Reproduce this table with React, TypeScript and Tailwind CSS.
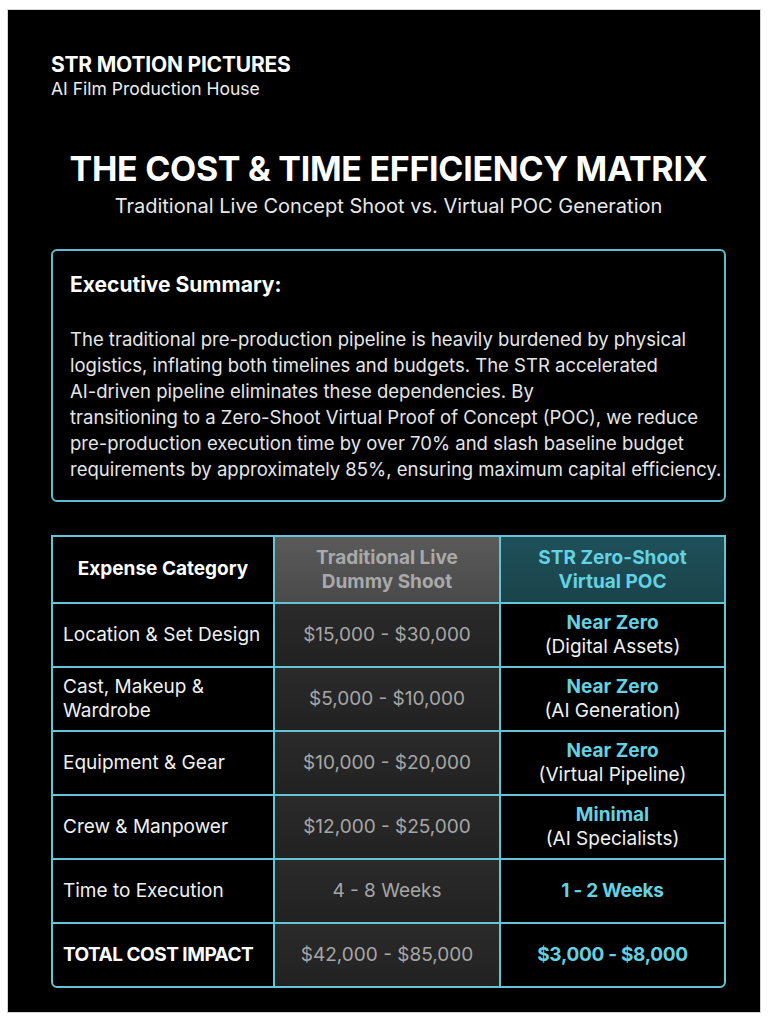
import React from "react";

type Row = {
  label: string;
  trad: string;
  str: string;
  note?: string;
  total?: boolean;
};

const rows: Row[] = [
  { label: "Location & Set Design", trad: "$15,000 - $30,000", str: "Near Zero", note: "(Digital Assets)" },
  { label: "Cast, Makeup & Wardrobe", trad: "$5,000 - $10,000", str: "Near Zero", note: "(AI Generation)" },
  { label: "Equipment & Gear", trad: "$10,000 - $20,000", str: "Near Zero", note: "(Virtual Pipeline)" },
  { label: "Crew & Manpower", trad: "$12,000 - $25,000", str: "Minimal", note: "(AI Specialists)" },
  { label: "Time to Execution", trad: "4 - 8 Weeks", str: "1 - 2 Weeks" },
  { label: "TOTAL COST IMPACT", trad: "$42,000 - $85,000", str: "$3,000 - $8,000", total: true },
];

const summary = [
  "The traditional pre-production pipeline is heavily burdened by physical",
  "logistics, inflating both timelines and budgets. The STR accelerated",
  "AI-driven pipeline eliminates these dependencies. By",
  "transitioning to a Zero-Shoot Virtual Proof of Concept (POC), we reduce",
  "pre-production execution time by over 70% and slash baseline budget",
  "requirements by approximately 85%, ensuring maximum capital efficiency.",
];

export default function App() {
  return (
    <div className="min-h-[1024px] bg-white px-[7px] pt-[9px] font-['Inter','Noto_Sans',sans-serif]">
      <div className="h-[1004px] border border-[#d4d4d4] bg-black pl-[43px] pr-[34px] pt-[42px] text-white">
        {/* brand */}
        <div className="text-[21px] font-bold leading-[25px] tracking-[-0.2px]">STR MOTION PICTURES</div>
        <div className="mt-[1px] text-[17.5px] leading-[22px] text-[#ececec]">AI Film Production House</div>

        {/* title */}
        <h1 className="mt-[49px] text-center text-[34px] font-bold leading-[40px] tracking-[-0.3px]">
          THE COST &amp; TIME EFFICIENCY MATRIX
        </h1>
        <p className="mt-[5px] text-center text-[20px] leading-[24px] text-[#e8e8e8]">
          Traditional Live Concept Shoot vs. Virtual POC Generation
        </p>

        {/* executive summary */}
        <div className="mt-[31px] h-[253px] rounded-[6px] border-2 border-[#5fbccc] px-[17px] pt-[21px]">
          <div className="text-[21px] font-bold leading-[26px]">Executive Summary:</div>
          <div className="mt-[28px] text-[18.5px] leading-[26px] text-[#e6e6e6]">
            {summary.map((l) => (
              <div key={l} className="whitespace-nowrap">
                {l}
              </div>
            ))}
          </div>
        </div>

        {/* matrix */}
        <div className="mt-[33px] grid grid-cols-[222px_226px_1fr] overflow-hidden rounded-b-[6px] border-2 border-[#62c6d8] text-[19px]">
          <div className="flex h-[67px] items-center justify-center border-b-2 border-r-2 border-[#62c6d8] font-bold">
            Expense Category
          </div>
          <div className="flex h-[67px] flex-col items-center justify-center border-b-2 border-r-2 border-[#62c6d8] bg-gradient-to-b from-[#5a5a5a] to-[#4a4a4a] text-center font-bold leading-[24px] text-[#a9a9a9]">
            <span>Traditional Live</span>
            <span>Dummy Shoot</span>
          </div>
          <div className="flex h-[67px] flex-col items-center justify-center border-b-2 border-[#62c6d8] bg-gradient-to-b from-[#1f5059] to-[#1a434b] text-center font-bold leading-[24px] text-[#63d2e2]">
            <span>STR Zero-Shoot</span>
            <span>Virtual POC</span>
          </div>

          {rows.map((r, i) => {
            const last = i === rows.length - 1;
            const b = last ? "h-[62px]" : "h-[64px] border-b-2";
            return (
              <React.Fragment key={r.label}>
                <div
                  className={`flex items-center border-r-2 border-[#62c6d8] pl-[10px] pr-2 leading-[24px] text-[#f0f0f0] ${b} ${
                    r.total ? "font-bold tracking-[-0.5px] text-white" : ""
                  }`}
                >
                  {r.label === "Cast, Makeup & Wardrobe" ? (
                    <span>
                      Cast, Makeup &amp;
                      <br />
                      Wardrobe
                    </span>
                  ) : (
                    r.label
                  )}
                </div>
                <div
                  className={`flex items-center justify-center border-r-2 border-[#62c6d8] bg-gradient-to-b from-[#2a2a2a] to-[#222222] text-[#a6a6a6] ${b}`}
                >
                  {r.trad}
                </div>
                <div
                  className={`flex flex-col items-center justify-center border-[#62c6d8] text-center leading-[24px] ${b}`}
                >
                  <span className={`font-bold text-[#63d2e2] ${r.total || !r.note ? "tracking-[-0.3px]" : ""}`}>
                    {r.str}
                  </span>
                  {r.note && <span className="text-[#f0f0f0]">{r.note}</span>}
                </div>
              </React.Fragment>
            );
          })}
        </div>
      </div>
    </div>
  );
}
